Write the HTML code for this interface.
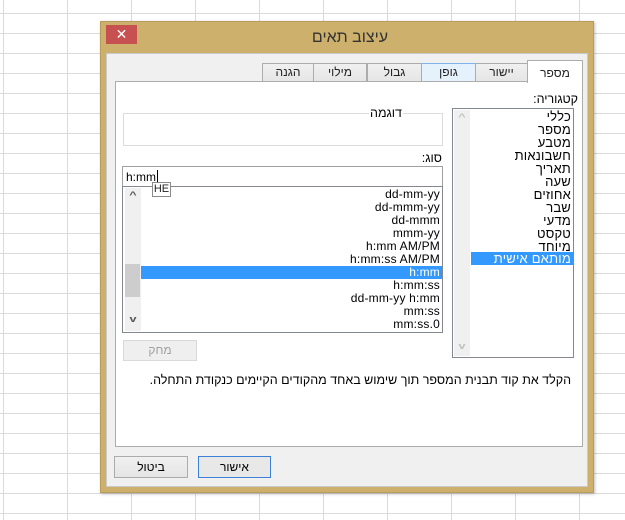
<!DOCTYPE html>
<html><head><meta charset="utf-8"><style>
*{box-sizing:border-box;margin:0;padding:0}
body{width:625px;height:520px;position:relative;overflow:hidden;background:#fff;font-family:"Liberation Sans","Noto Sans CJK SC",sans-serif;font-size:12px;color:#000;
background-image:linear-gradient(to right,#dadada 1px,transparent 1px),linear-gradient(to bottom,#dadada 1px,transparent 1px);background-size:64px 20px;background-position:3px 13px;}
.a{position:absolute}
.t{position:absolute;white-space:nowrap;direction:rtl}
.tab{position:absolute;top:63px;height:19px;border:1px solid #acacac;border-bottom:none;background:linear-gradient(#f0f0f0,#e5e5e5);text-align:center;line-height:17px;font-size:12px;color:#222;direction:rtl}
.row{position:absolute;right:2px;height:13px;line-height:13px;font-size:12px;white-space:nowrap;letter-spacing:0.2px}
.arr{position:absolute;width:16px;text-align:center;font-size:9px;font-weight:bold;transform:scaleX(1.4)}
</style></head><body>
<div class="a" style="left:100px;top:21px;width:494px;height:472px;background:#cdb06b;border:1px solid #b89d5a;box-shadow:1px 1px 3px rgba(0,0,0,.25)"></div>
<div class="a" style="left:106px;top:25px;width:31px;height:19px;background:#c75050;color:#fff;text-align:center;font-size:14px;line-height:18px">✕</div>
<div class="t" style="left:0;width:700px;top:29px;text-align:center;font-size:16px;color:#333;direction:rtl;left:0">עיצוב תאים</div>
<div class="a" style="left:106px;top:53px;width:482px;height:434px;background:#f0f0f0;border:1px solid #c9c9c9"></div>
<div class="tab" style="left:262px;width:52px">הגנה</div>
<div class="tab" style="left:313px;width:54px">מילוי</div>
<div class="tab" style="left:367px;width:55px">גבול</div>
<div class="tab" style="left:421px;width:55px;background:#e5f1fb;border-color:#7eb4ea">גופן</div>
<div class="tab" style="left:475px;width:53px">יישור</div>
<div class="a" style="left:115px;top:81px;width:468px;height:366px;background:#fff;border:1px solid #acacac"></div>
<div class="tab" style="left:527px;top:60px;height:23px;width:56px;background:#fff;line-height:24px">מספר</div>
<div class="t" style="right:47px;top:92px;font-size:12.5px">קטגוריה:</div>
<div class="a" style="left:452px;top:108px;width:122px;height:250px;border:1px solid #828790;background:#fff">
 <div class="a" style="left:1px;top:1px;width:16px;height:246px;background:#f0f0f0"></div>
 <div class="arr" style="left:1px;top:3px;color:#c0c0c0">^</div>
 <div class="arr" style="left:1px;top:232px;color:#c0c0c0">v</div>
 <div class="row" style="top:1px;font-size:13px">כללי</div>
 <div class="row" style="top:14px;font-size:13px">מספר</div>
 <div class="row" style="top:27px;font-size:13px">מטבע</div>
 <div class="row" style="top:40px;font-size:13px">חשבונאות</div>
 <div class="row" style="top:53px;font-size:13px">תאריך</div>
 <div class="row" style="top:66px;font-size:13px">שעה</div>
 <div class="row" style="top:79px;font-size:13px">אחוזים</div>
 <div class="row" style="top:92px;font-size:13px">שבר</div>
 <div class="row" style="top:105px;font-size:13px">מדעי</div>
 <div class="row" style="top:118px;font-size:13px">טקסט</div>
 <div class="row" style="top:131px;font-size:13px">מיוחד</div>
 <div class="a" style="left:18px;top:143px;width:102px;height:13px;background:#3399ff"></div>
 <div class="row" style="top:143px;font-size:13px;color:#fff">מותאם אישית</div>
</div>
<div class="a" style="left:123px;top:113px;width:320px;height:33px;border:1px solid #dcdcdc"></div>
<div class="t" style="right:222px;top:106px;background:#fff;padding:0 1px;font-size:12.5px">דוגמה</div>
<div class="t" style="right:183px;top:151px;font-size:12.5px">סוג:</div>
<div class="a" style="left:122px;top:166px;width:321px;height:21px;border:1px solid #a0a0a0;background:#fff;padding:3px 3px;font-size:12px">h:mm<span style="border-left:1px solid #000;margin-left:1px"></span></div>
<div class="a" style="left:122px;top:186px;width:321px;height:147px;border:1px solid #828790;background:#fff">
 <div class="a" style="left:2px;top:1px;width:16px;height:143px;background:#f0f0f0"></div>
 <div class="a" style="left:2px;top:77px;width:15px;height:33px;background:#cdcdcd"></div>
 <div class="arr" style="left:2px;top:3px;color:#555">^</div>
 <div class="arr" style="left:2px;top:127px;color:#555">v</div>
 <div class="row" style="top:1px">dd-mm-yy</div>
 <div class="row" style="top:14px">dd-mmm-yy</div>
 <div class="row" style="top:27px">dd-mmm</div>
 <div class="row" style="top:40px">mmm-yy</div>
 <div class="row" style="top:53px">h:mm AM/PM</div>
 <div class="row" style="top:66px">h:mm:ss AM/PM</div>
 <div class="a" style="left:18px;top:79px;width:301px;height:13px;background:#3399ff"></div>
 <div class="row" style="top:79px;color:#fff">h:mm</div>
 <div class="row" style="top:92px">h:mm:ss</div>
 <div class="row" style="top:105px">dd-mm-yy h:mm</div>
 <div class="row" style="top:118px">mm:ss</div>
 <div class="row" style="top:131px">mm:ss.0</div>
</div>
<div class="a" style="left:152px;top:182px;width:19px;height:15px;border:1px solid #8a8a8a;background:#fff;font-size:11px;line-height:13px;text-align:center;color:#222">HE</div>
<div class="a" style="left:123px;top:340px;width:74px;height:21px;border:1px solid #d9d9d9;background:#efefef;color:#a0a0a0;text-align:center;line-height:19px;direction:rtl">מחק</div>
<div class="t" style="right:54px;top:373px;font-size:12.5px">הקלד את קוד תבנית המספר תוך שימוש באחד מהקודים הקיימים כנקודת התחלה.</div>
<div class="a" style="left:198px;top:456px;width:73px;height:22px;border:1px solid #3c7fd8;background:#e8e8e8;text-align:center;line-height:20px;direction:rtl">אישור</div>
<div class="a" style="left:114px;top:456px;width:74px;height:22px;border:1px solid #acacac;background:linear-gradient(#f0f0f0,#e5e5e5);text-align:center;line-height:20px;direction:rtl">ביטול</div>
</body></html>
